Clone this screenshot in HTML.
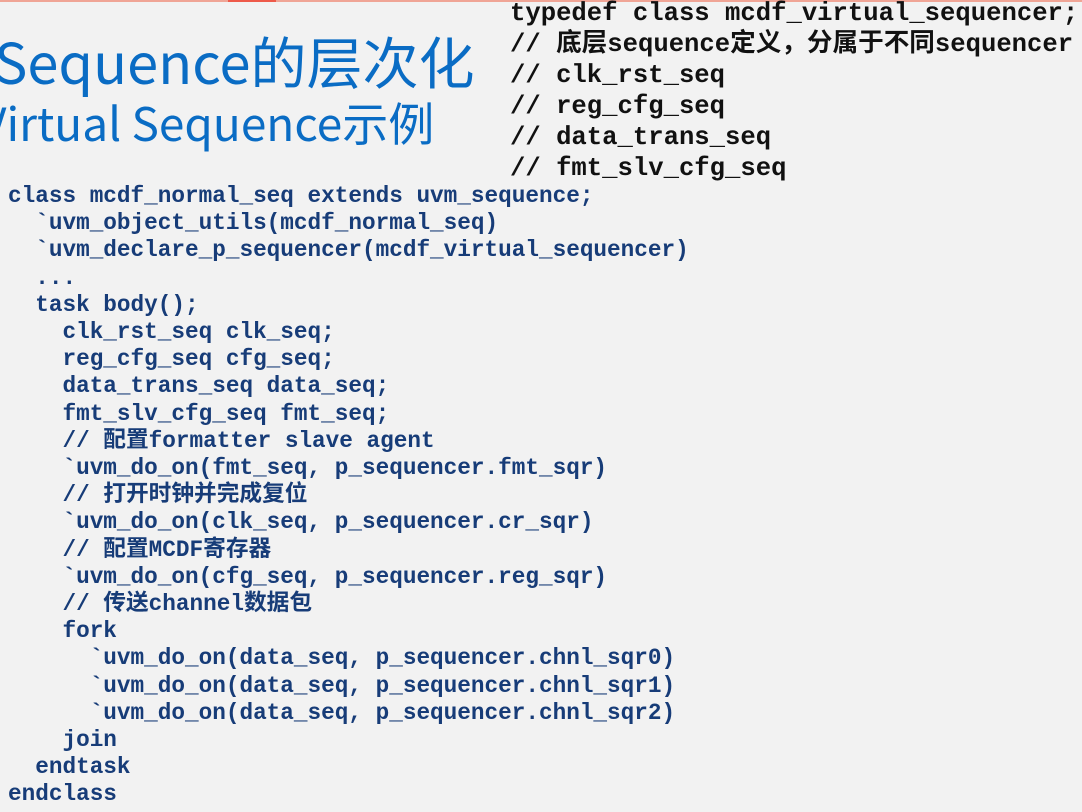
<!DOCTYPE html>
<html><head><meta charset="utf-8"><style>
html,body{margin:0;padding:0;}
body{width:1082px;height:812px;background:#f2f2f2;position:relative;overflow:hidden;}
.bar{position:absolute;left:0;top:0;width:1082px;height:2px;background:#f0a596;}
.bar2{position:absolute;left:228px;top:0;width:48px;height:2px;background:#ee5a4a;}
.t1{position:absolute;left:-6px;top:33px;font:56px/1 "Noto Sans CJK SC",sans-serif;color:#0a6cc4;white-space:nowrap;}
.t2{position:absolute;left:-20px;top:99px;font:46px/1 "Noto Sans CJK SC",sans-serif;color:#0a6cc4;white-space:nowrap;}
pre{margin:0;position:absolute;font-weight:bold;white-space:pre;}
.tr{left:510px;top:-2px;font-family:"Liberation Mono","Noto Sans CJK SC",monospace;font-size:25.6px;line-height:31px;color:#111;}
.code{left:8px;top:183px;font-family:"Liberation Mono","Noto Sans CJK SC",monospace;font-size:22.7px;line-height:27.2px;color:#173c78;}
</style></head><body>
<div class="bar"></div><div class="bar2"></div>
<div class="t1">Sequence的层次化</div>
<div class="t2">Virtual Sequence示例</div>
<pre class="tr">typedef class mcdf_virtual_sequencer;
// 底层sequence定义，分属于不同sequencer
// clk_rst_seq
// reg_cfg_seq
// data_trans_seq
// fmt_slv_cfg_seq</pre>
<pre class="code">class mcdf_normal_seq extends uvm_sequence;
  `uvm_object_utils(mcdf_normal_seq)
  `uvm_declare_p_sequencer(mcdf_virtual_sequencer)
  ...
  task body();
    clk_rst_seq clk_seq;
    reg_cfg_seq cfg_seq;
    data_trans_seq data_seq;
    fmt_slv_cfg_seq fmt_seq;
    // 配置formatter slave agent
    `uvm_do_on(fmt_seq, p_sequencer.fmt_sqr)
    // 打开时钟并完成复位
    `uvm_do_on(clk_seq, p_sequencer.cr_sqr)
    // 配置MCDF寄存器
    `uvm_do_on(cfg_seq, p_sequencer.reg_sqr)
    // 传送channel数据包
    fork
      `uvm_do_on(data_seq, p_sequencer.chnl_sqr0)
      `uvm_do_on(data_seq, p_sequencer.chnl_sqr1)
      `uvm_do_on(data_seq, p_sequencer.chnl_sqr2)
    join
  endtask
endclass</pre>
</body></html>
